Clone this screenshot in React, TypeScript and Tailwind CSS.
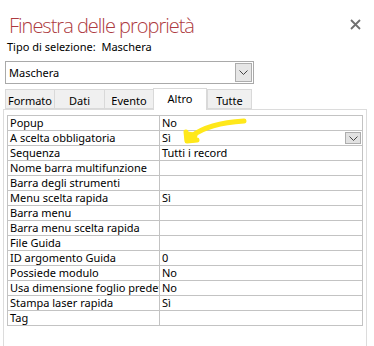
import React from "react";

const rows: [string, string, boolean?][] = [
  ["Popup", "No"],
  ["A scelta obbligatoria", "Sì", true],
  ["Sequenza", "Tutti i record"],
  ["Nome barra multifunzione", ""],
  ["Barra degli strumenti", ""],
  ["Menu scelta rapida", "Sì"],
  ["Barra menu", ""],
  ["Barra menu scelta rapida", ""],
  ["File Guida", ""],
  ["ID argomento Guida", "0"],
  ["Possiede modulo", "No"],
  ["Usa dimensione foglio predefinito", "No"],
  ["Stampa laser rapida", "Sì"],
  ["Tag", ""],
];

const tabs = [
  { name: "Formato", w: 49 },
  { name: "Dati", w: 50 },
  { name: "Evento", w: 49 },
  { name: "Altro", w: 54, active: true },
  { name: "Tutte", w: 45 },
];

function Chevron() {
  return (
    <svg width="9" height="5" viewBox="0 0 9 5" fill="none">
      <path d="M0.5 0.5 L4.5 4.5 L8.5 0.5" stroke="#444" strokeWidth="1" />
    </svg>
  );
}

export default function App() {
  return (
    <div
      className="relative w-[374px] h-[346px] overflow-hidden bg-white text-black"
      style={{ fontFamily: '"Segoe UI", "Noto Sans", sans-serif' }}
    >
      {/* header */}
      <div className="flex items-start justify-between pl-[9px] pr-[13px] pt-[14px]">
        <div
          className="text-[20px] leading-[24px] tracking-[-1px] text-[#ad3a40] font-light"
          style={{ fontFamily: '"Segoe UI Light", "Open Sans", sans-serif' }}
        >
          Finestra delle proprietà
        </div>
        <svg width="11" height="11" viewBox="0 0 11 11" className="mt-[5px]">
          <path d="M1 1 L10 10 M10 1 L1 10" stroke="#707070" strokeWidth="1.8" />
        </svg>
      </div>
      <div className="pl-[7px] mt-[1px] text-[11px] leading-[16px] whitespace-pre">
        Tipo di selezione:  Maschera
      </div>

      {/* combobox */}
      <div className="ml-[5px] mt-[6px] w-[249px] h-[23px] border border-[#a9a9a9] flex items-center justify-between pl-[3px] pr-[1px]">
        <span className="text-[11px] leading-[16px]">Maschera</span>
        <div className="w-[17px] h-[19px] bg-[#e6e6e6] border border-[#adadad] flex items-center justify-center">
          <Chevron />
        </div>
      </div>

      {/* tabs */}
      <div className="mt-[3px] ml-[5px] flex items-end h-[22px] relative z-10">
        {tabs.map((t) =>
          t.active ? (
            <div
              key={t.name}
              style={{ width: t.w }}
              className="h-[22px] -mb-px bg-white border border-b-0 border-[#d9d9d9] flex justify-center pt-[2px] text-[11px] leading-[16px]"
            >
              {t.name}
            </div>
          ) : (
            <div
              key={t.name}
              style={{ width: t.w }}
              className="h-[20px] bg-[#f0f0f0] border border-r-0 last:border-r border-[#d9d9d9] flex justify-center pt-[3px] text-[11px] leading-[16px]"
            >
              {t.name}
            </div>
          )
        )}
      </div>

      {/* panel */}
      <div className="ml-[3px] w-[364px] h-[260px] border border-[#dcdcdc] pl-[3px] pt-[5px]">
        <div className="w-[356px] border-t border-l border-[#c3c3c3]">
          {rows.map(([label, value, dd]) => (
            <div key={label} className="flex h-[15px]">
              <div className="w-[152px] border-r border-b border-[#c3c3c3] pl-[2px] overflow-hidden whitespace-nowrap text-[11px] leading-[14px]">
                {label}
              </div>
              <div className="flex-1 border-r border-b border-[#c3c3c3] pl-[2px] flex items-center justify-between overflow-hidden whitespace-nowrap text-[11px] leading-[14px]">
                <span>{value}</span>
                {dd && (
                  <div className="w-[16px] h-[12px] mr-[1px] bg-[#e1e1e1] border border-[#adadad] flex items-center justify-center">
                    <Chevron />
                  </div>
                )}
              </div>
            </div>
          ))}
        </div>
      </div>

      {/* yellow hand-drawn arrow */}
      <svg
        className="absolute left-0 top-0 pointer-events-none"
        width="374"
        height="346"
        viewBox="0 0 374 346"
      >
        <path
          d="M244 121 C 228 122, 206 125, 192 136"
          stroke="#ffe81a"
          strokeWidth="5"
          strokeLinecap="round"
          fill="none"
        />
        <path
          d="M187 141 L186 132 M187 141 L197 140"
          stroke="#ffe81a"
          strokeWidth="5"
          strokeLinecap="round"
          fill="none"
        />
        <path d="M184 131 L198 133 L196 142 L185 143 Z" fill="#ffe81a" />
      </svg>
    </div>
  );
}
